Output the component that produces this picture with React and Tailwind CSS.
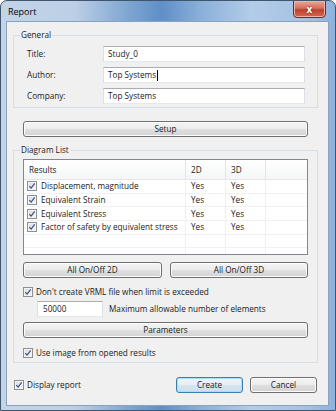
import React from "react";

function Check() {
  return (
    <span className="flex h-[10px] w-[10px] shrink-0 items-center justify-center border border-[#8e8f8f] bg-[linear-gradient(135deg,#d8d8d8,#fbfbfb)] shadow-[inset_0_0_0_1px_#f4f4f4]">
      <svg viewBox="0 0 10 10" className="h-[8px] w-[8px]">
        <path d="M1.6 5.2 L3.9 7.6 L8.4 1.8" fill="none" stroke="#3b4e8a" strokeWidth="1.5" />
      </svg>
    </span>
  );
}

function Btn({ children, className = "", def = false }) {
  const look = def
    ? "border-[#3c7fb1] bg-[linear-gradient(#eef6fb_0%,#e3eef6_50%,#d6e6f1_51%,#cddeea_100%)] shadow-[inset_0_0_0_1px_#a8dff5]"
    : "border-[#707070] bg-[linear-gradient(#f4f4f4_0%,#ececec_50%,#e0e0e0_51%,#d3d3d3_100%)] shadow-[inset_0_0_0_1px_#fcfcfc]";
  return (
    <div className={`flex h-[16px] items-center justify-center rounded-[3px] border ${look} ${className}`}>
      {children}
    </div>
  );
}

function Field({ value, caret }) {
  return (
    <div className="flex h-[16px] w-[202px] items-center border border-[#abadb3] border-x-[#dbdfe6] border-b-[#e3e9ef] bg-white pl-[4px]">
      <span>{value}</span>
      {caret && <span className="ml-[1px] h-[11px] w-px bg-black" />}
    </div>
  );
}

const rows = [
  "Displacement, magnitude",
  "Equivalent Strain",
  "Equivalent Stress",
  "Factor of safety by equivalent stress",
];

export default function App() {
  return (
    <div className="h-[411px] w-[336px] bg-white font-['Open_Sans','Noto_Sans',sans-serif] text-[8.2px] leading-[12px] text-[#1a1a1a]">
      <div className="flex h-[411px] w-[336px] flex-col overflow-hidden rounded-t-[7px] border border-[#40566f] bg-[linear-gradient(90deg,#c3d4e7_0%,#bccfe5_22%,#7fa6d2_38%,#5f8fc7_48%,#8bb0da_60%,#b3cce8_75%,#a6c3e3_90%,#8fb2dc_100%)]">
        {/* title bar */}
        <div className="flex h-[21px] shrink-0 items-start justify-between">
          <span className="ml-[7px] mt-[5px] text-[9px] text-black">Report</span>
          <div className="mr-[9px] mt-[-1px] flex h-[18px] w-[33px] items-center justify-center rounded-b-[4px] border border-[#6b2d26] bg-[linear-gradient(#e8a898_0%,#d3705f_45%,#c0402e_55%,#d16a4f_100%)] shadow-[inset_0_0_0_1px_#efb4a6]">
            <span className="text-[10px] font-bold leading-[10px] text-white [text-shadow:0_0_2px_#5a1d14]">x</span>
          </div>
        </div>

        {/* client area */}
        <div className="ml-[6px] flex h-[383px] w-[321px] flex-col bg-[#f0f0f0] shadow-[0_0_0_1px_#8ba2bd]">
          {/* General */}
          <fieldset className="ml-[6px] mt-[7px] w-[305px] border border-[#d5dfe5] pb-[3px] pl-[13px] pt-[5px]">
            <legend className="ml-[-7px] px-[1px] leading-[12px]">General</legend>
            <div className="flex flex-col gap-[5px]">
              <div className="flex items-center">
                <span className="w-[76px]">Title:</span>
                <Field value="Study_0" />
              </div>
              <div className="flex items-center">
                <span className="w-[76px]">Author:</span>
                <Field value="Top Systems" caret />
              </div>
              <div className="flex items-center">
                <span className="w-[76px]">Company:</span>
                <Field value="Top Systems" />
              </div>
            </div>
          </fieldset>

          <Btn className="ml-[16px] mt-[13px] w-[285px]">Setup</Btn>

          {/* Diagram List */}
          <fieldset className="ml-[6px] mt-[7px] w-[305px] border border-[#d5dfe5] pb-[3px] pl-[9px] pt-[3px]">
            <legend className="ml-[-3px] px-[1px] leading-[12px]">Diagram List</legend>

            <div className="flex h-[96px] w-[285px] flex-col overflow-hidden border border-[#828790] bg-white">
              <div className="flex h-[20px] shrink-0 border-b border-[#e5e5e5] bg-[linear-gradient(#ffffff,#f5f6f7)]">
                <div className="flex w-[162px] items-center border-r border-[#e5e5e5] pl-[5px]">Results</div>
                <div className="flex w-[40px] items-center border-r border-[#e5e5e5] pl-[5px]">2D</div>
                <div className="flex w-[40px] items-center border-r border-[#e5e5e5] pl-[5px]">3D</div>
                <div className="flex-1" />
              </div>
              {[...rows, "", ""].map((r, i) => (
                <div key={i} className="flex h-[13.7px] shrink-0 border-b border-[#f0f0f0]">
                  <div className="flex w-[162px] items-center gap-[4px] border-r border-[#f0f0f0] pl-[3px]">
                    {r && <Check />}
                    <span className="whitespace-nowrap">{r}</span>
                  </div>
                  <div className="flex w-[40px] items-center border-r border-[#f0f0f0] pl-[5px]">{r && "Yes"}</div>
                  <div className="flex w-[40px] items-center border-r border-[#f0f0f0] pl-[5px]">{r && "Yes"}</div>
                  <div className="flex-1" />
                </div>
              ))}
            </div>

            <div className="mt-[7px] flex w-[285px] gap-[8px]">
              <Btn className="w-[139px]">All On/Off 2D</Btn>
              <Btn className="w-[138px]">All On/Off 3D</Btn>
            </div>

            <div className="mt-[8px] flex h-[12px] items-center gap-[3px]">
              <Check />
              <span>Don't create VRML file when limit is exceeded</span>
            </div>

            <div className="mt-[3px] flex items-center">
              <div className="ml-[14px] flex h-[16px] w-[66px] items-center border border-[#abadb3] border-x-[#dbdfe6] border-b-[#e3e9ef] bg-white pl-[5px]">
                50000
              </div>
              <span className="ml-[6px]">Maximum allowable number of elements</span>
            </div>

            <Btn className="mt-[5px] w-[285px]">Parameters</Btn>

            <div className="mt-[9px] flex h-[12px] items-center gap-[3px]">
              <Check />
              <span>Use image from opened results</span>
            </div>
          </fieldset>

          {/* bottom */}
          <div className="mt-[14px] flex items-center">
            <div className="ml-[7px] flex items-center gap-[3px]">
              <Check />
              <span>Display report</span>
            </div>
            <div className="ml-auto mr-[11px] flex gap-[7px]">
              <Btn def className="w-[67px]">Create</Btn>
              <Btn className="w-[67px]">Cancel</Btn>
            </div>
          </div>
        </div>
      </div>
    </div>
  );
}
